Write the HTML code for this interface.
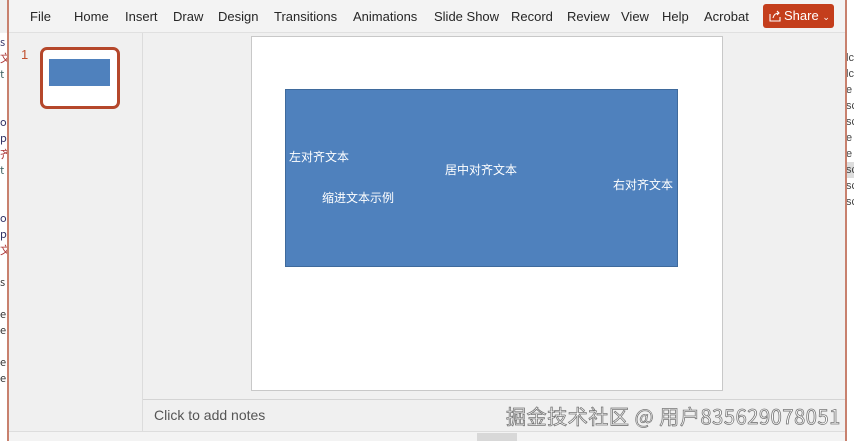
<!DOCTYPE html>
<html><head><meta charset="utf-8"><style>
*{margin:0;padding:0;box-sizing:border-box}
body{width:854px;height:441px;overflow:hidden;background:#f0f0f0;font-family:"Liberation Sans","Noto Sans CJK SC",sans-serif;position:relative}
.a{position:absolute}
.tab{position:absolute;top:9px;font-size:13px;color:#262626}
.cjk{font-family:"Noto Sans CJK SC","Liberation Sans",sans-serif}
</style></head><body>
<!-- left outer window strip -->
<div class="a" style="left:0;top:33px;width:8px;height:408px;background:#fff"></div>
<div class="a cjk" style="left:0;top:34px;font-size:11px;line-height:16px;color:#333">
<div style="color:#336">s</div><div style="color:#a33">文</div><div style="color:#466">t</div><br><br>
<div style="color:#336">o</div><div style="color:#336">p</div><div style="color:#a33">齐</div><div style="color:#466">t</div><br><br>
<div style="color:#336">o</div><div style="color:#336">p</div><div style="color:#a33">文</div><br><div>s</div><br><div>e</div><div>e</div><br><div>e</div><div>e</div></div>
<div class="a" style="left:7px;top:0;width:2px;height:441px;background:#c8816e"></div>
<div class="a" style="left:9px;top:33px;width:836px;height:408px;background:#f0f0f0"></div>
<!-- right strip -->
<div class="a" style="left:846px;top:0;width:8px;height:441px;background:#fff;font-size:11px;line-height:16px;color:#444;padding-top:34px">
<div>&nbsp;</div><div>lc</div><div>lc</div><div>e</div><div>sc</div><div>sc</div><div>e</div><div>e</div><div style="background:#ddd">sc</div><div>sc</div><div>sc</div></div>
<div class="a" style="left:845px;top:0;width:2px;height:441px;background:#c8816e"></div>
<!-- top bar -->
<div class="a" style="left:9px;top:0;width:836px;height:33px;background:#f3f3f3;border-bottom:1px solid #e0e0e0"></div>
<div class="tab" style="left:30px">File</div>
<div class="tab" style="left:74px">Home</div>
<div class="tab" style="left:125px">Insert</div>
<div class="tab" style="left:173px">Draw</div>
<div class="tab" style="left:218px">Design</div>
<div class="tab" style="left:274px">Transitions</div>
<div class="tab" style="left:353px">Animations</div>
<div class="tab" style="left:434px">Slide Show</div>
<div class="tab" style="left:511px">Record</div>
<div class="tab" style="left:567px">Review</div>
<div class="tab" style="left:621px">View</div>
<div class="tab" style="left:662px">Help</div>
<div class="tab" style="left:704px">Acrobat</div>
<div class="a" style="left:763px;top:4px;width:71px;height:24px;background:#c43e1c;border-radius:3px;color:#fff;font-size:13px;padding:4px 0 0 21px">Share <span style="font-size:9px">⌄</span>
<svg class="a" style="left:6px;top:5px" width="12" height="13" viewBox="0 0 12 13"><path d="M1 5v7h10V8M4 9c1-4 3-5 6-5M8 2l2 2-2 2" fill="none" stroke="#fff" stroke-width="1.1"/></svg></div>
<!-- left panel -->
<div class="a" style="left:142px;top:33px;width:1px;height:398px;background:#dcdcdc"></div>
<div class="a" style="left:21px;top:47px;font-size:13px;color:#c0502e">1</div>
<div class="a" style="left:40px;top:47px;width:80px;height:62px;border:3px solid #b5472b;border-radius:7px;background:#fff"></div>
<div class="a" style="left:49px;top:59px;width:61px;height:27px;background:#4f81bd"></div>
<!-- slide -->
<div class="a" style="left:251px;top:36px;width:472px;height:355px;background:#fff;border:1px solid #c8c8c8"></div>
<div class="a" style="left:285px;top:89px;width:393px;height:178px;background:#4f81bd;border:1px solid #3f6a9c"></div>
<div class="a cjk" style="left:289px;top:148px;font-size:12px;color:#fff">左对齐文本</div>
<div class="a cjk" style="left:445px;top:161px;font-size:12px;color:#fff">居中对齐文本</div>
<div class="a cjk" style="left:613px;top:176px;font-size:12px;color:#fff">右对齐文本</div>
<div class="a cjk" style="left:322px;top:189px;font-size:12px;color:#fff">缩进文本示例</div>
<!-- notes -->
<div class="a" style="left:143px;top:399px;width:702px;height:1px;background:#d4d4d4"></div>
<div class="a" style="left:154px;top:407px;font-size:14px;color:#555">Click to add notes</div>
<div class="a cjk" style="left:506px;top:401px;font-size:20px;color:#fff;-webkit-text-stroke:0.8px #777;letter-spacing:0.6px">掘金技术社区 @ 用户835629078051</div>
<div class="a" style="left:9px;top:431px;width:836px;height:10px;background:#f3f3f3;border-top:1px solid #ddd"></div>
<div class="a" style="left:477px;top:433px;width:40px;height:8px;background:#d8d8d8"></div>
</body></html>
